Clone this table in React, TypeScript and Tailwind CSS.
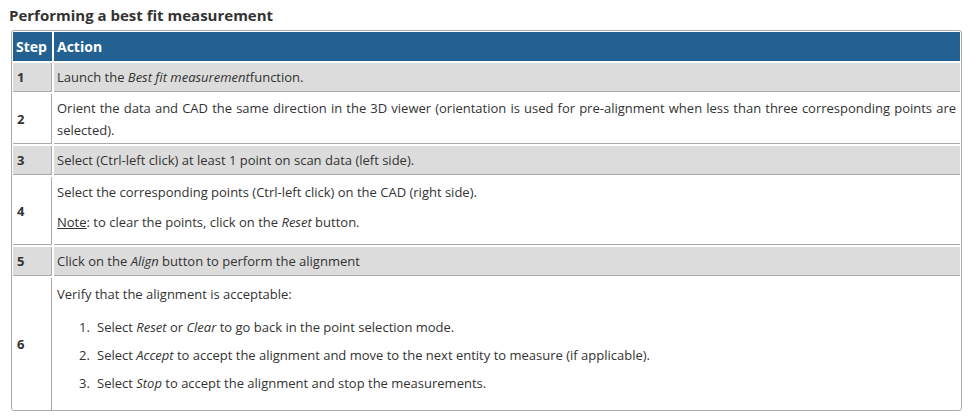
import React from 'react';

const font = { fontFamily: '"Open Sans", "Noto Sans", sans-serif' };

const StepCell: React.FC<{ n: string; gray?: boolean; last?: boolean; h: string }> = ({ n, gray, last, h }) => (
  <div
    className={`flex items-center pl-[4px] border-r border-[#aaa] text-[13px] font-bold text-[#333] ${h} ${gray ? 'bg-[#dcdcdc]' : 'bg-white'} ${last ? '' : 'border-b'}`}
  >
    {n}
  </div>
);

const Item: React.FC<{ n: string; children: React.ReactNode }> = ({ n, children }) => (
  <li className="flex">
    <span className="w-[18px] shrink-0">{n}</span>
    <span>{children}</span>
  </li>
);

const App: React.FC = () => {
  return (
    <div className="w-[970px] h-[418px] bg-white text-[#333] text-[13px] leading-[22px]" style={font}>
      <h2 className="pl-[9px] pt-[5px] h-[30px] text-[15px] leading-[20px] font-bold text-[#333]">
        Performing a best fit measurement
      </h2>
      <div className="ml-[11px] w-[951px] border border-[#aaa] rounded-[3px] p-[1px] pb-0">
        <div className="grid grid-cols-[39px_1fr] gap-[2px]">
          {/* header */}
          <div className="h-[29px] flex items-center pl-[3px] bg-[#236192] text-white text-[14px] font-bold">Step</div>
          <div className="h-[29px] flex items-center pl-[3px] bg-[#236192] text-white text-[14px] font-bold">Action</div>

          {/* 1 */}
          <StepCell n="1" gray h="h-[29px]" />
          <div className="h-[29px] flex items-center pl-[3px] bg-[#dcdcdc] border-b border-[#aaa]">
            <span>
              Launch the <em>Best fit measurement</em>function.
            </span>
          </div>

          {/* 2 */}
          <StepCell n="2" h="h-[50px]" />
          <div className="h-[50px] pl-[3px] pr-[4px] pt-[3px] border-b border-[#aaa] text-justify">
            Orient the data and CAD the same direction in the 3D viewer (orientation is used for pre-alignment when
            less than three corresponding points are selected).
          </div>

          {/* 3 */}
          <StepCell n="3" gray h="h-[29px]" />
          <div className="h-[29px] flex items-center pl-[3px] bg-[#dcdcdc] border-b border-[#aaa]">
            Select (Ctrl-left click) at least 1 point on scan data (left side).
          </div>

          {/* 4 */}
          <StepCell n="4" h="h-[68px]" />
          <div className="h-[68px] pl-[3px] pr-[4px] pt-[4px] border-b border-[#aaa] flex flex-col gap-[8px]">
            <p>Select the corresponding points (Ctrl-left click) on the CAD (right side).</p>
            <p>
              <span className="underline">Note</span>: to clear the points, click on the <em>Reset</em> button.
            </p>
          </div>

          {/* 5 */}
          <StepCell n="5" gray h="h-[29px]" />
          <div className="h-[29px] flex items-center pl-[3px] bg-[#dcdcdc] border-b border-[#aaa]">
            <span>
              Click on the <em>Align</em> button to perform the alignment
            </span>
          </div>

          {/* 6 */}
          <StepCell n="6" last h="h-[132px]" />
          <div className="h-[132px] pl-[3px] pr-[4px] pt-[5px]">
            <p>Verify that the alignment is acceptable:</p>
            <ol className="pl-[22px] mt-[11px] flex flex-col gap-[6px]">
              <Item n="1.">
                Select <em>Reset</em> or <em>Clear</em> to go back in the point selection mode.
              </Item>
              <Item n="2.">
                Select <em>Accept</em> to accept the alignment and move to the next entity to measure (if applicable).
              </Item>
              <Item n="3.">
                Select <em>Stop</em> to accept the alignment and stop the measurements.
              </Item>
            </ol>
          </div>
        </div>
      </div>
    </div>
  );
};

export default App;
